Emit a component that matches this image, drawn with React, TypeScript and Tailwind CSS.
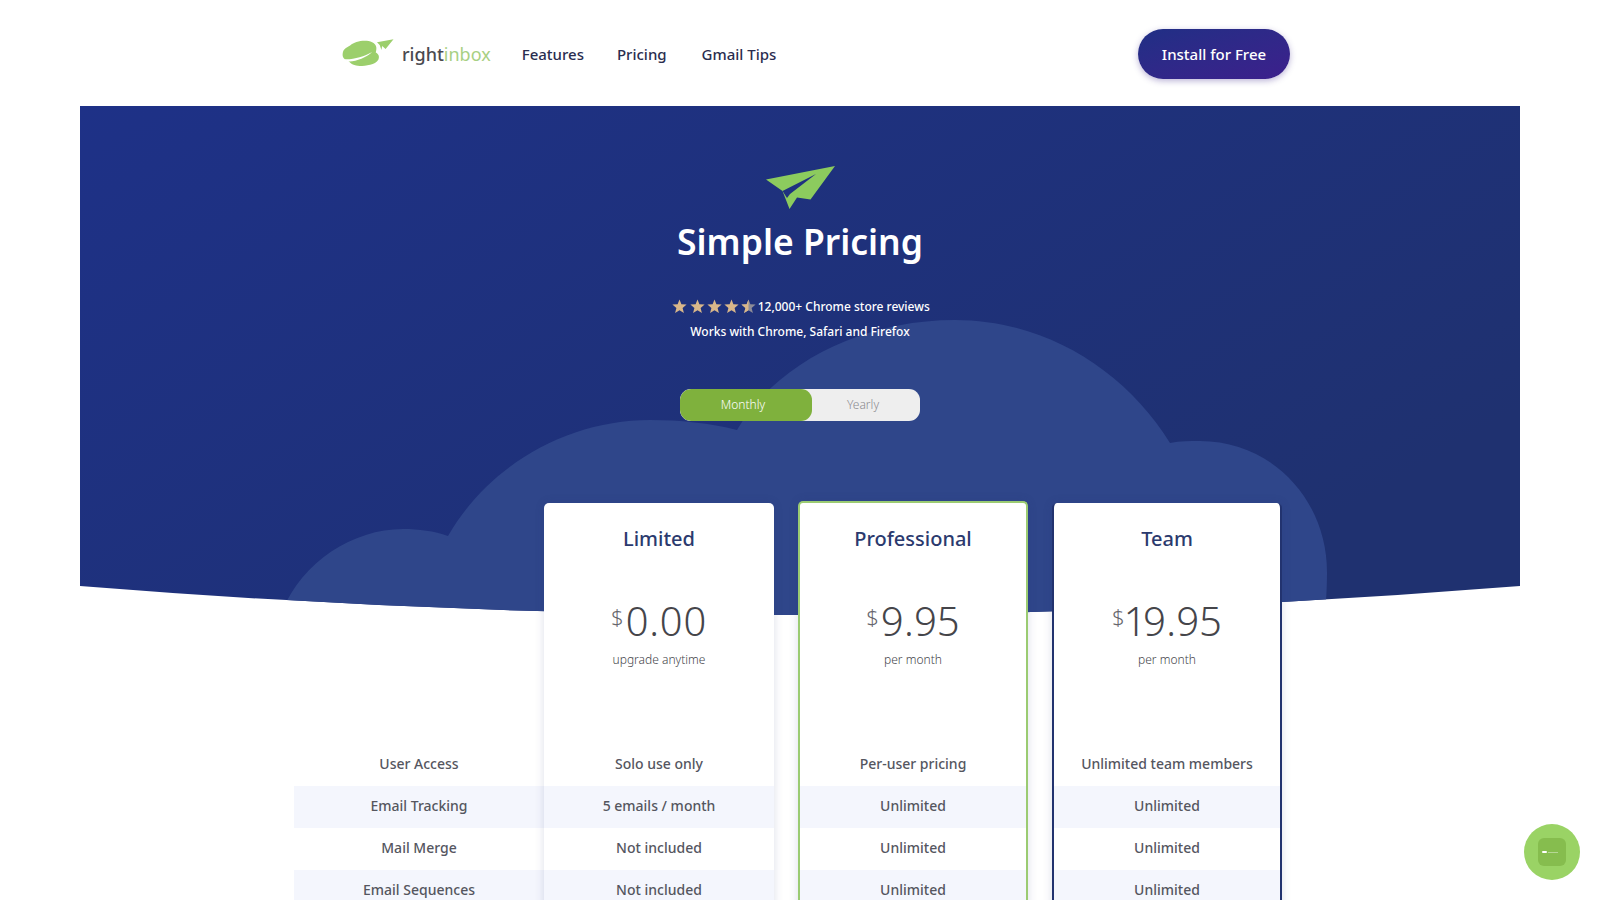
const FONT = "font-['Noto_Sans','Open_Sans',sans-serif]";

const ROWS = ["User Access", "Email Tracking", "Mail Merge", "Email Sequences"];

const PLANS = [
  {
    name: "Limited",
    price: "0.00",
    note: "upgrade anytime",
    cells: ["Solo use only", "5 emails / month", "Not included", "Not included"],
    frame: "w-[230px] ml-0 mt-0",
  },
  {
    name: "Professional",
    price: "9.95",
    note: "per month",
    cells: ["Per-user pricing", "Unlimited", "Unlimited", "Unlimited"],
    frame: "w-[230px] ml-[24px] -mt-[2px] border-2 border-b-0 border-[#9bcb72]",
  },
  {
    name: "Team",
    price: "19.95",
    note: "per month",
    cells: ["Unlimited team members", "Unlimited", "Unlimited", "Unlimited"],
    frame: "w-[230px] ml-[24px] mt-0 border-x-2 border-[#22336f]",
  },
];

/** Paper plane above the heading. */
function PlaneGlyph() {
  return (
    <svg width="70" height="44" viewBox="0 0 70 44" aria-hidden>
      <path
        d="M1 13.500 70 0 45.500 33.500 32 31.500 24.500 43 17.500 25Z"
        fill="#8ccb5e"
      />
      <path d="M17.500 25 51 8 25 28 22 32Z" fill="#1f3180" />
    </svg>
  );
}

function Star({ half }: { half?: boolean }) {
  const d = "M7.500 0.500 9.400 5.300 14.600 5.600 10.600 9 11.900 14 7.500 11.200 3.100 14 4.400 9 0.400 5.600 5.600 5.300Z";
  return (
    <svg width="15" height="15" viewBox="0 0 15 15" aria-hidden className="mr-[2.300px]">
      <path d={d} fill={half ? "#8d8c98" : "#d9b78a"} />
      {half && <path d={d} fill="#d9b78a" style={{ clipPath: "inset(0 50% 0 0)" }} />}
    </svg>
  );
}

/** Right Inbox logo: green cloud with a small plane leaving it. */
function LogoMark() {
  return (
    <svg width="54" height="31" viewBox="0 0 52 30" aria-hidden className="-mt-[2px]">
      <path
        d="M1.500 15C2 10 6 9 9 7 13 3 24 1 30 4 34 6 35 9 33.500 14 36 15 37.500 18 36 21 33 26 24 27 18 27 13 27 9 25 7 22 3 21 1 19 1.500 15Z"
        fill="#9ccf6c"
      />
      <path d="M3 20.500C12 21 22 18 30 13.500 24 19 13 23.500 6 22.500Z" fill="#fff" />
      <path d="M34.700 4 50.700 1.300 43 10.700 39.700 7.700 39 11.700 37.300 6.700Z" fill="#9ccf6c" />
    </svg>
  );
}

/** Hero backdrop: gradient panel with a curved foot and the pale cloud. */
function HeroBackdrop() {
  const panel = "M80 106H1520V586Q800 644 80 586Z";
  return (
    <svg
      className="absolute left-0 top-0"
      width="1440"
      height="540"
      viewBox="80 106 1440 540"
      aria-hidden
    >
      <defs>
        <linearGradient id="hero" x1="0" y1="0" x2="1" y2="0.600">
          <stop offset="0" stopColor="#1e3187" />
          <stop offset="1" stopColor="#1f3170" />
        </linearGradient>
        <clipPath id="panel">
          <path d={panel} />
        </clipPath>
      </defs>
      <path d={panel} fill="url(#hero)" />
      <path
        clipPath="url(#panel)"
        fill="#2f468a"
        d="M279 620C296 566 350 529 403 529 419 529 434 531 448 536 490 463 570 420 650 420 680 420 710 423 737 430 775 365 860 320 955 320 1045 320 1125 370 1170 443 1180 441 1190 441 1200 441 1272 441 1327 500 1327 572 1327 590 1326 605 1324 620Z"
      />
    </svg>
  );
}

function Cell({ text, index }: { text: string; index: number }) {
  return (
    <div
      className={
        index % 2 === 1
          ? "flex h-[42px] items-center justify-center bg-[#f4f6fd] pb-[3px] text-[14px] font-medium text-[#55565f]"
          : "flex h-[42px] items-center justify-center pb-[3px] text-[14px] font-medium text-[#55565f]"
      }
    >
      {text}
    </div>
  );
}

function PlanCard({ plan }: { plan: (typeof PLANS)[number] }) {
  return (
    <div
      className={`${plan.frame} rounded-t-[5px] bg-white pt-[21px] shadow-[0_0_10px_rgba(40,50,110,0.16)]`}
    >
      <h2 className="text-center text-[20px] leading-[30px] font-medium text-[#2b3a6e]">
        {plan.name}
      </h2>
      <div className="mt-[39px] flex h-[56px] items-center justify-center text-[#45454a]">
        <span className="-mt-[10px] mr-[2px] text-[22px] font-light text-[#66666c]">$</span>
        <span className="text-[40px] leading-[56px] font-light tracking-[0.5px] proportional-nums">
          {plan.price}
        </span>
      </div>
      <p className="mt-[1px] text-center text-[12px] leading-[20px] font-light text-[#45454a]">
        {plan.note}
      </p>
      <div className="mt-[74px]">
        {plan.cells.map((cell, i) => (
          <Cell key={i} text={cell} index={i} />
        ))}
      </div>
    </div>
  );
}

export default function App() {
  return (
    <div className={`${FONT} relative h-[900px] overflow-hidden bg-white`}>
      <header className="flex h-[106px] items-center pl-[341px] pr-[310px] pt-[2px]">
        <LogoMark />
        <span className="ml-[7px] text-[18px] font-medium text-[#4a4a4f]">
          right<span className="font-normal text-[#a8d083]">inbox</span>
        </span>
        <nav className="ml-[31px] flex gap-[35px] text-[15px] font-medium text-[#2a2d4f]">
          <a className="-mr-[2px]">Features</a>
          <a>Pricing</a>
          <a>Gmail Tips</a>
        </nav>
        <a className="ml-auto flex h-[50px] w-[152px] items-center justify-center rounded-full bg-gradient-to-br from-[#1f2f85] to-[#3c1f8c] text-[15px] font-medium text-white shadow-[0_2px_6px_rgba(60,40,140,0.35)]">
          Install for Free
        </a>
      </header>

      <main className="relative mx-[80px]">
        <HeroBackdrop />
        <div className="relative flex flex-col items-center pt-[60px]">
          <PlaneGlyph />
          <h1 className="mt-[6px] text-[35.500px] leading-[50px] font-semibold text-white">
            Simple Pricing
          </h1>
          <div className="mt-[28px] flex h-[25px] items-center text-[12px] font-medium text-white">
            <span className="ml-[2px]" />
            <Star />
            <Star />
            <Star />
            <Star />
            <Star half />
            <span className="-ml-[1px]">12,000+ Chrome store reviews</span>
          </div>
          <p className="text-[12px] leading-[25px] font-medium text-white">
            Works with Chrome, Safari and Firefox
          </p>
          <div className="mt-[45px] flex h-[32px] w-[240px] overflow-hidden rounded-[11px] bg-[#eeeeee] text-[12px] font-light">
            <span className="flex w-[132px] items-center justify-center rounded-[11px] bg-[#7fb13d] pr-[6px] text-white">
              Monthly
            </span>
            <span className="flex flex-1 items-center justify-center pr-[6px] text-[#8a8a8f]">
              Yearly
            </span>
          </div>
        </div>

        <div className="relative ml-[214px] mt-[82px] flex items-start">
          <div className="w-[250px] pt-[241px]">
            {ROWS.map((row, i) => (
              <Cell key={row} text={row} index={i} />
            ))}
          </div>
          {PLANS.map((plan) => (
            <PlanCard key={plan.name} plan={plan} />
          ))}
        </div>
      </main>

      <div className="fixed left-[1524px] top-[824px] flex size-[56px] items-center justify-center rounded-full bg-[#9ad365]">
        <div className="flex h-[28px] w-[28px] items-center rounded-[6px] bg-[#86bd4e] pl-[4px]">
          <span className="h-[2px] w-[5px] rounded-full bg-white" />
          <span className="ml-[1px] h-px w-[10px] bg-white/40" />
        </div>
      </div>
    </div>
  );
}
